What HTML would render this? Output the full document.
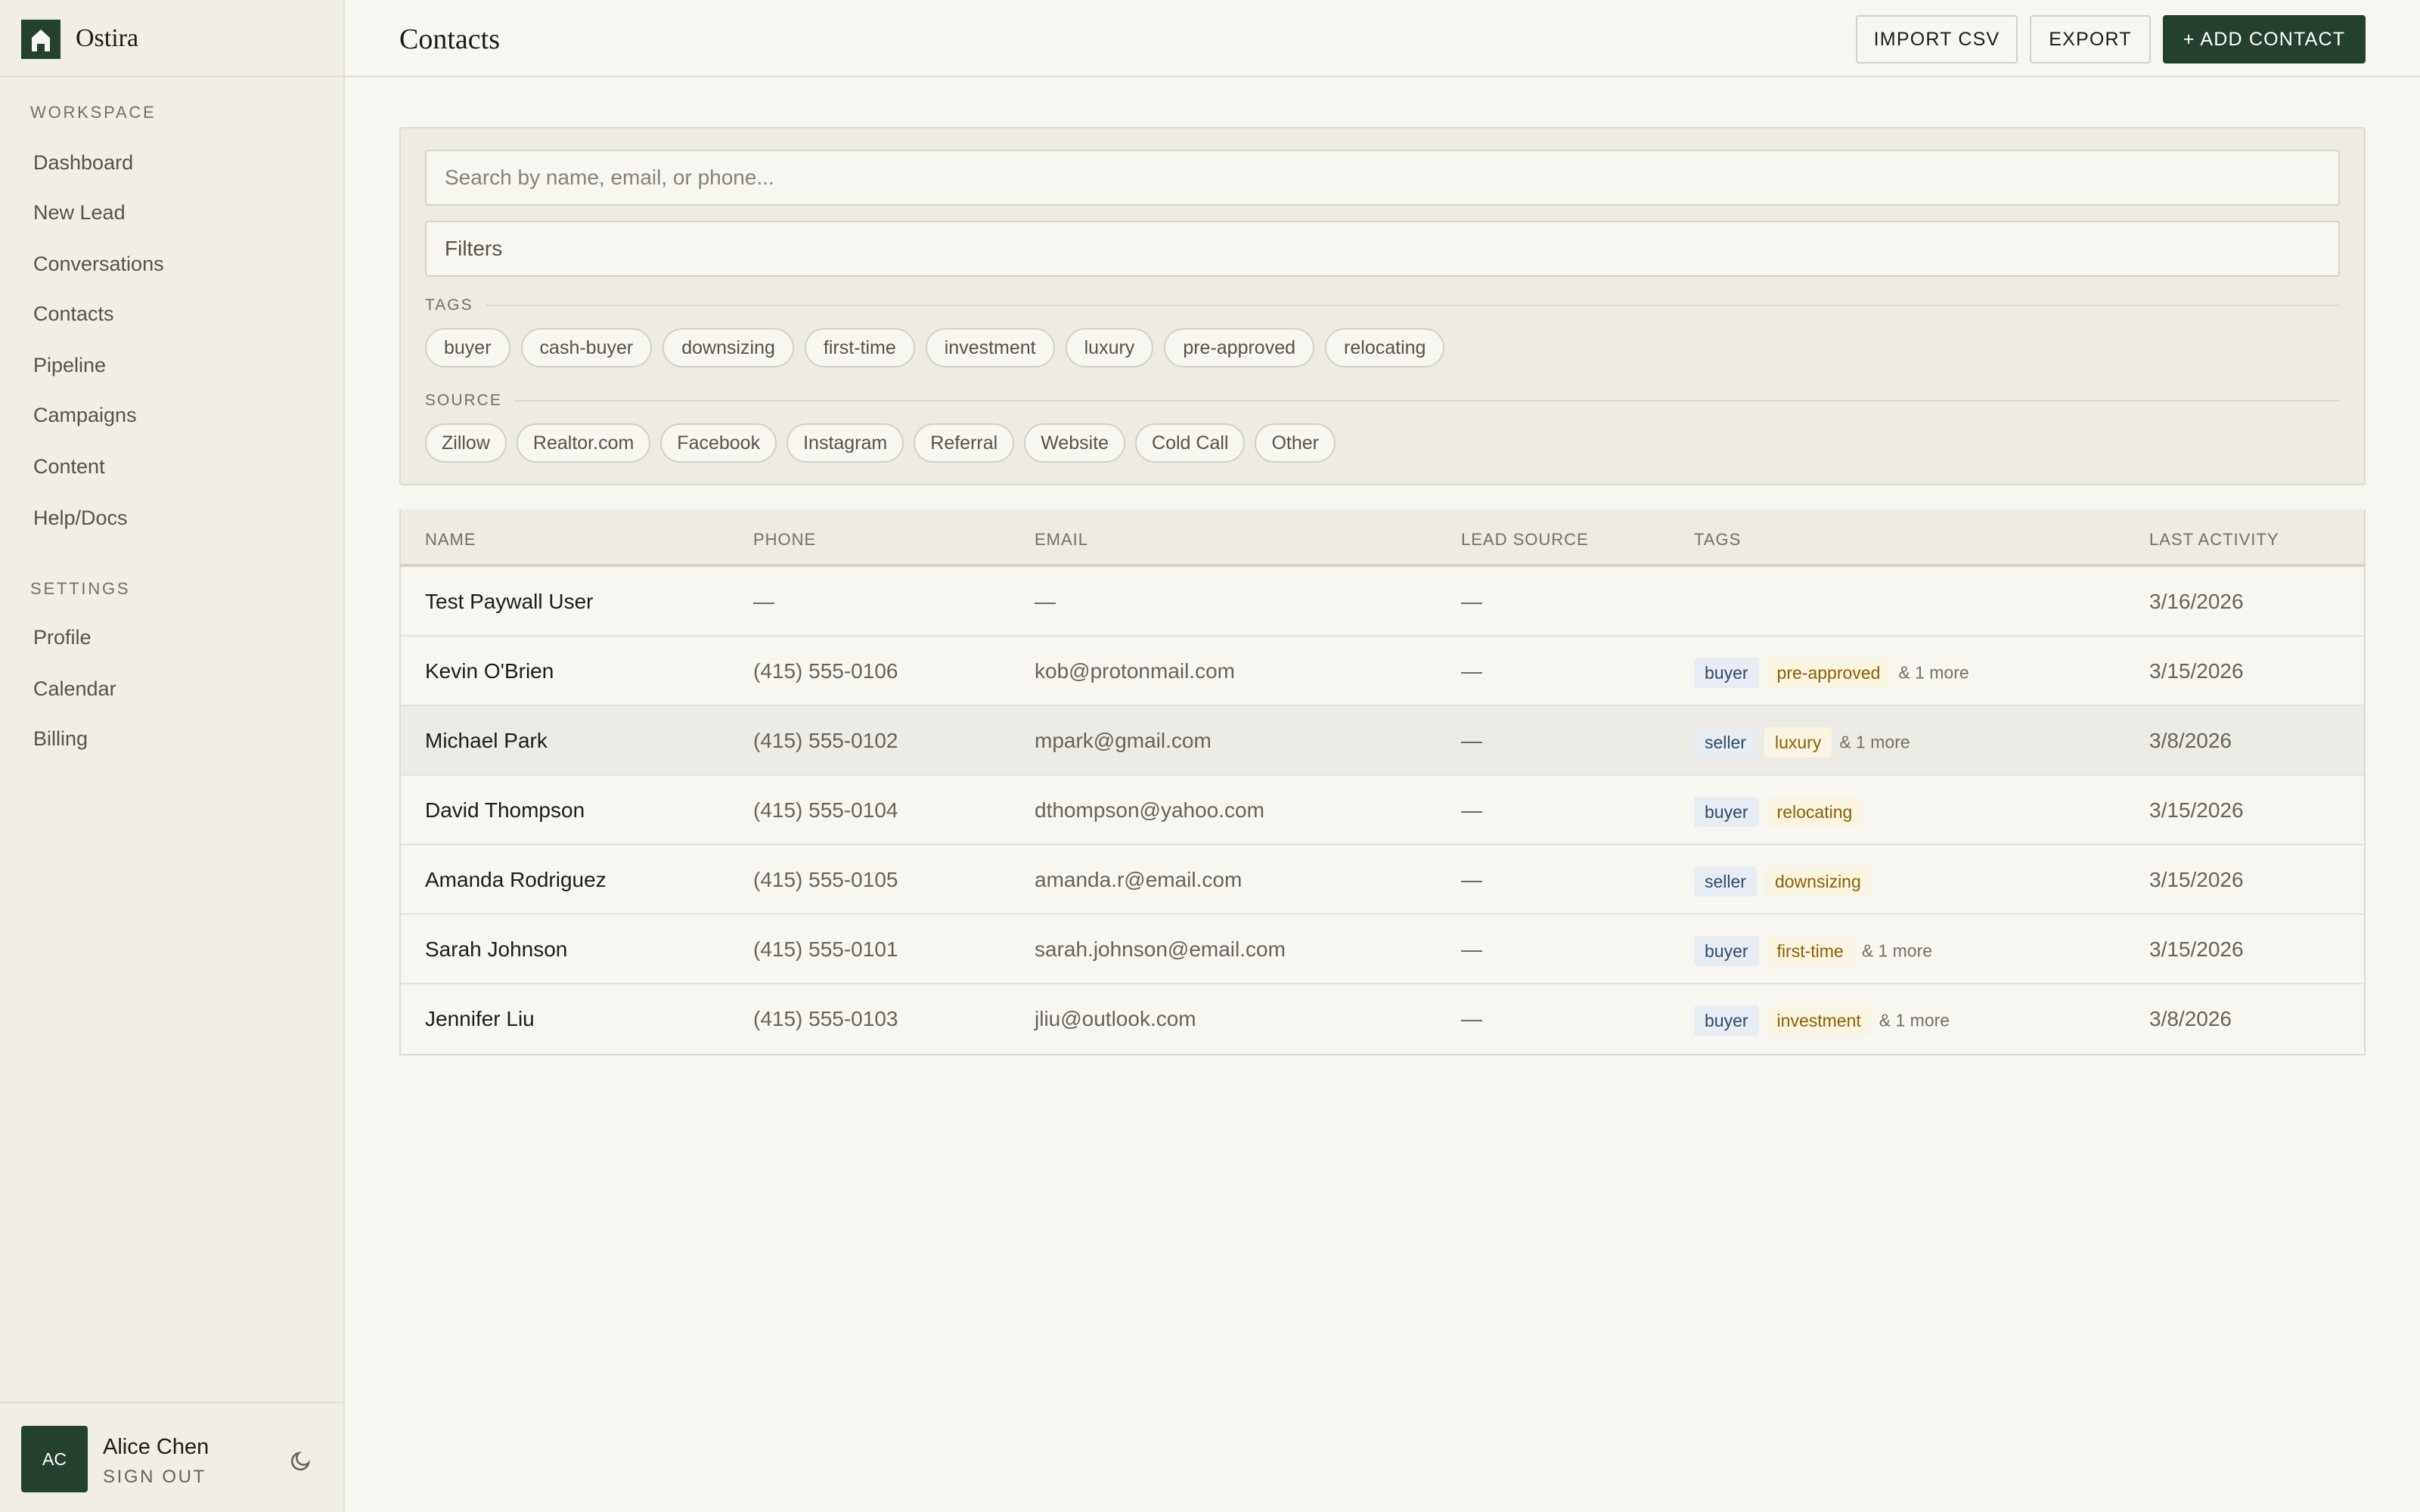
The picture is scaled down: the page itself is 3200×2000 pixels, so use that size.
<!DOCTYPE html>
<html><head><meta charset="utf-8"><style>
html{zoom:2}
*{box-sizing:border-box;margin:0;padding:0}
body{width:1600px;height:1000px;overflow:hidden;background:#f8f6f1;font-family:"Liberation Sans",sans-serif;color:#1f1c18;position:relative}
.side{position:absolute;left:0;top:0;width:228px;height:1000px;background:#f1eee7;border-right:1px solid #e0ddd5}
.logo{height:51px;border-bottom:1px solid #e0ddd5;position:relative}
.logo .box{position:absolute;left:14px;top:13px;width:26px;height:26px;background:#24402f}
.logo .name{position:absolute;left:50px;top:16px;font-family:"Liberation Serif",serif;font-size:17px;color:#1f1c18}
.sec{position:absolute;left:20px;font-size:11px;letter-spacing:1.4px;color:#7a6e60}
.nav{position:absolute;left:22px;font-size:13.5px;color:#5a5148}
.foot{position:absolute;left:0;top:927px;width:227px;height:73px;border-top:1px solid #e0ddd5}
.av{position:absolute;left:14px;top:15px;width:44px;height:44px;background:#24402f;border-radius:2px;color:#fff;font-size:11.5px;text-align:center;line-height:44px}
.main{position:absolute;left:228px;top:0;right:0}
.hdr{height:51px;border-bottom:1px solid #e0ddd5;position:relative}
.title{position:absolute;left:36px;top:15px;font-family:"Liberation Serif",serif;font-size:19px}
.btn{position:absolute;top:10px;height:32px;border:1px solid #d3d0c8;border-radius:2px;font-size:12.5px;letter-spacing:.6px;line-height:30px;text-align:center;color:#1f1c18;background:#f8f6f1}
.panel{position:absolute;left:36px;top:84px;width:1300px;height:237px;background:#eeebe3;border:1px solid #dedad1;border-radius:2px}
.inp{position:absolute;left:16px;width:1266px;height:37px;border:1px solid #d6d2c8;background:#f8f6f1;border-radius:2px;font-size:14px;padding-left:12px;line-height:35px}
.lbl{position:absolute;left:16px;font-size:10.5px;letter-spacing:1px;color:#7a6e60;display:flex;align-items:center;width:1266px}
.lbl:after{content:"";flex:1;height:1px;background:#dcd8cf;margin-left:8px}
.chips{position:absolute;left:16px;display:flex;gap:7px}
.chip{height:26px;border:1px solid #d3cfc6;border-radius:13px;background:#f8f6f1;padding:0 10px;font-size:12.5px;line-height:24px;color:#5a5148}
.t .chip{padding:0 11.5px}
.s{gap:6.5px}
.tbl{position:absolute;left:36px;top:337px;width:1300px;border:1px solid #dedad1;border-top:none}
.th{height:38px;background:#eeebe3;border-bottom:2px solid #d6d2c8;position:relative;font-size:11px;letter-spacing:.5px;color:#7a6e60}
.row{height:46px;border-bottom:1px solid #e4e1da;position:relative;font-size:14px;color:#6b6257}
.row:last-child{border-bottom:none}
.c{position:absolute;top:1px;line-height:44px;white-space:nowrap}
.th .c{line-height:38px}
.n{color:#1f1c18}
.tg{display:inline-block;height:20px;line-height:20px;padding:0 7px;border-radius:2px;font-size:11.5px;margin-right:5px;vertical-align:middle}
.b{background:#e7edf3;color:#2f4a68}.y{background:#faf4e3;color:#8a6200}
.more{font-size:11.5px;color:#7a6e60;vertical-align:middle}
</style></head><body>
<div class="side">
 <div class="logo"><div class="box"><svg width="26" height="26" viewBox="0 0 26 26"><path d="M7 21V12L13 6.5L19 12V21H15.5V16H10.5V21Z" fill="#f8f6f1"/></svg></div><div class="name">Ostira</div></div>
 <div class="sec" style="top:68px">WORKSPACE</div>
 <div class="nav" style="top:100px">Dashboard</div>
 <div class="nav" style="top:133px">New Lead</div>
 <div class="nav" style="top:167px">Conversations</div>
 <div class="nav" style="top:200px">Contacts</div>
 <div class="nav" style="top:234px">Pipeline</div>
 <div class="nav" style="top:267px">Campaigns</div>
 <div class="nav" style="top:301px">Content</div>
 <div class="nav" style="top:335px">Help/Docs</div>
 <div class="sec" style="top:383px">SETTINGS</div>
 <div class="nav" style="top:414px">Profile</div>
 <div class="nav" style="top:448px">Calendar</div>
 <div class="nav" style="top:481px">Billing</div>
 <div class="foot"><div class="av">AC</div>
  <div style="position:absolute;left:68px;top:21px;font-size:14.5px">Alice Chen</div>
  <div style="position:absolute;left:68px;top:42px;font-size:12px;letter-spacing:1.3px;color:#6b6257">SIGN OUT</div>
  <svg style="position:absolute;left:191px;top:30px" width="16" height="16" viewBox="0 0 16 16"><path d="M13 9.5A5.5 5.5 0 1 1 6.5 3 4.3 4.3 0 0 0 13 9.5Z" fill="none" stroke="#6b6257" stroke-width="1.3"/></svg>
 </div>
</div>
<div class="main">
 <div class="hdr"><div class="title">Contacts</div>
  <div class="btn" style="left:999px;width:107px">IMPORT CSV</div>
  <div class="btn" style="left:1114px;width:80px">EXPORT</div>
  <div class="btn" style="left:1202px;width:134px;background:#24402f;border-color:#24402f;color:#fff">+ ADD CONTACT</div>
 </div>
 <div class="panel">
  <div class="inp" style="top:14px;color:#8a8177">Search by name, email, or phone...</div>
  <div class="inp" style="top:61px;color:#5a5148">Filters</div>
  <div class="lbl" style="top:111px">TAGS</div>
  <div class="chips t" style="top:132px"><div class="chip">buyer</div><div class="chip">cash-buyer</div><div class="chip">downsizing</div><div class="chip">first-time</div><div class="chip">investment</div><div class="chip">luxury</div><div class="chip">pre-approved</div><div class="chip">relocating</div></div>
  <div class="lbl" style="top:174px">SOURCE</div>
  <div class="chips s" style="top:195px"><div class="chip">Zillow</div><div class="chip">Realtor.com</div><div class="chip">Facebook</div><div class="chip">Instagram</div><div class="chip">Referral</div><div class="chip">Website</div><div class="chip">Cold Call</div><div class="chip">Other</div></div>
 </div>
 <div class="tbl">
  <div class="th"><span class="c" style="left:16px">NAME</span><span class="c" style="left:233px">PHONE</span><span class="c" style="left:419px">EMAIL</span><span class="c" style="left:701px">LEAD SOURCE</span><span class="c" style="left:855px">TAGS</span><span class="c" style="left:1156px">LAST ACTIVITY</span></div>
  <div class="row"><span class="c n" style="left:16px">Test Paywall User</span><span class="c" style="left:233px">—</span><span class="c" style="left:419px">—</span><span class="c" style="left:701px">—</span><span class="c" style="left:1156px">3/16/2026</span></div>
  <div class="row"><span class="c n" style="left:16px">Kevin O'Brien</span><span class="c" style="left:233px">(415) 555-0106</span><span class="c" style="left:419px">kob@protonmail.com</span><span class="c" style="left:701px">—</span><span class="c" style="left:855px"><span class="tg b">buyer</span><span class="tg y">pre-approved</span><span class="more">&amp; 1 more</span></span><span class="c" style="left:1156px">3/15/2026</span></div>
  <div class="row" style="background:#ecebe5"><span class="c n" style="left:16px">Michael Park</span><span class="c" style="left:233px">(415) 555-0102</span><span class="c" style="left:419px">mpark@gmail.com</span><span class="c" style="left:701px">—</span><span class="c" style="left:855px"><span class="tg b">seller</span><span class="tg y">luxury</span><span class="more">&amp; 1 more</span></span><span class="c" style="left:1156px">3/8/2026</span></div>
  <div class="row"><span class="c n" style="left:16px">David Thompson</span><span class="c" style="left:233px">(415) 555-0104</span><span class="c" style="left:419px">dthompson@yahoo.com</span><span class="c" style="left:701px">—</span><span class="c" style="left:855px"><span class="tg b">buyer</span><span class="tg y">relocating</span></span><span class="c" style="left:1156px">3/15/2026</span></div>
  <div class="row"><span class="c n" style="left:16px">Amanda Rodriguez</span><span class="c" style="left:233px">(415) 555-0105</span><span class="c" style="left:419px">amanda.r@email.com</span><span class="c" style="left:701px">—</span><span class="c" style="left:855px"><span class="tg b">seller</span><span class="tg y">downsizing</span></span><span class="c" style="left:1156px">3/15/2026</span></div>
  <div class="row"><span class="c n" style="left:16px">Sarah Johnson</span><span class="c" style="left:233px">(415) 555-0101</span><span class="c" style="left:419px">sarah.johnson@email.com</span><span class="c" style="left:701px">—</span><span class="c" style="left:855px"><span class="tg b">buyer</span><span class="tg y">first-time</span><span class="more">&amp; 1 more</span></span><span class="c" style="left:1156px">3/15/2026</span></div>
  <div class="row"><span class="c n" style="left:16px">Jennifer Liu</span><span class="c" style="left:233px">(415) 555-0103</span><span class="c" style="left:419px">jliu@outlook.com</span><span class="c" style="left:701px">—</span><span class="c" style="left:855px"><span class="tg b">buyer</span><span class="tg y">investment</span><span class="more">&amp; 1 more</span></span><span class="c" style="left:1156px">3/8/2026</span></div>
 </div>
</div>
</body></html>
